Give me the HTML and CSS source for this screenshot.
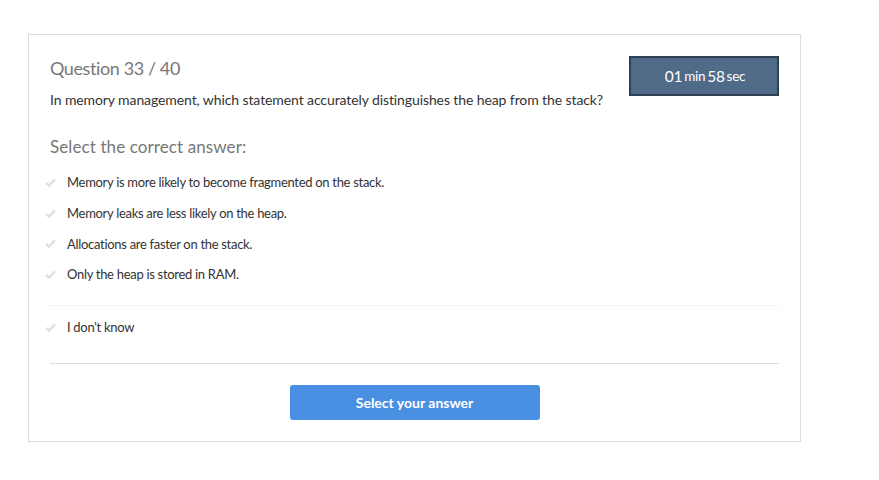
FILE: index.html
```html
<!DOCTYPE html>
<html>
<head>
<meta charset="utf-8">
<link rel="stylesheet" href="styles.css">
</head>
<body>
<div class="card">
  <div class="head">
    <div class="head-left">
      <h1 class="title">Question 33 / 40</h1>
      <p class="question">In memory management, which statement accurately distinguishes the heap from the stack?</p>
    </div>
    <div class="timer"><span class="num">01</span> min <span class="num">58</span> sec</div>
  </div>
  <h2 class="subtitle">Select the correct answer:</h2>
  <ul class="options">
    <li class="opt"><svg class="chk" viewBox="0 0 12 10"><path d="M1 5.5 L4.3 8.5 L11 1.5" fill="none" stroke="#e0e0e0" stroke-width="2.6"/></svg>Memory is more likely to become fragmented on the stack.</li>
    <li class="opt"><svg class="chk" viewBox="0 0 12 10"><path d="M1 5.5 L4.3 8.5 L11 1.5" fill="none" stroke="#e0e0e0" stroke-width="2.6"/></svg>Memory leaks are less likely on the heap.</li>
    <li class="opt"><svg class="chk" viewBox="0 0 12 10"><path d="M1 5.5 L4.3 8.5 L11 1.5" fill="none" stroke="#e0e0e0" stroke-width="2.6"/></svg>Allocations are faster on the stack.</li>
    <li class="opt"><svg class="chk" viewBox="0 0 12 10"><path d="M1 5.5 L4.3 8.5 L11 1.5" fill="none" stroke="#e0e0e0" stroke-width="2.6"/></svg>Only the heap is stored in RAM.</li>
  </ul>
  <div class="sep light"></div>
  <ul class="options">
    <li class="opt"><svg class="chk" viewBox="0 0 12 10"><path d="M1 5.5 L4.3 8.5 L11 1.5" fill="none" stroke="#e0e0e0" stroke-width="2.6"/></svg>I don't know</li>
  </ul>
  <div class="sep"></div>
  <div class="actions">
    <button class="btn">Select your answer</button>
  </div>
</div>
</body>
</html>
```
FILE: styles.css
```css
* { box-sizing: border-box; }
body {
  margin: 0;
  padding: 34px 0 0 28px;
  background: #fff;
  font-family: Lato, "Open Sans", sans-serif;
  color: #333;
}
.card {
  width: 773px;
  height: 408px;
  border: 1px solid #dcdcdc;
  padding: 20px 21px 0 21px;
}
.head {
  display: flex;
  justify-content: space-between;
  align-items: flex-start;
}
.title {
  margin: 0;
  font-size: 18px;
  font-weight: 400;
  color: #777;
  line-height: 26px;
  letter-spacing: -0.4px;
}
.question {
  margin: 10px 0 0;
  font-size: 14px;
  line-height: 18px;
  color: #333;
  letter-spacing: -0.1px;
}
.timer {
  margin-top: 1px;
  width: 150px;
  height: 40px;
  background: #4f6b88;
  border: 2px solid #2f4052;
  color: #fff;
  font-size: 13.5px;
  display: flex;
  align-items: center;
  justify-content: center;
  letter-spacing: -0.3px;
}
.timer .num { font-size: 15.5px; margin: 0 2px; }
.subtitle {
  margin: 26px 0 0;
  font-size: 17px;
  font-weight: 400;
  color: #777;
  line-height: 24px;
  letter-spacing: 0.1px;
}
.options {
  list-style: none;
  margin: 8px 0 0;
  padding: 0;
}
.opt {
  display: flex;
  align-items: center;
  height: 30.7px;
  font-size: 13px;
  color: #333;
  margin-left: -5px;
  letter-spacing: -0.3px;
}
.chk {
  width: 11px;
  height: 9px;
  margin-right: 11px;
  flex: none;
}
.sep {
  height: 1px;
  background: #dddddd;
}
.sep.light {
  background: #f2f2f2;
  margin-top: 15px;
}
.sep.light + .options { margin-top: 6px; }
.sep:not(.light) { margin-top: 21px; }
.actions {
  display: flex;
  justify-content: center;
  padding-top: 21px;
}
.btn {
  width: 250px;
  height: 35px;
  border: none;
  border-radius: 3px;
  background: #4a90e2;
  color: #fff;
  font-family: Lato, sans-serif;
  font-weight: 700;
  font-size: 14px;
}
```
